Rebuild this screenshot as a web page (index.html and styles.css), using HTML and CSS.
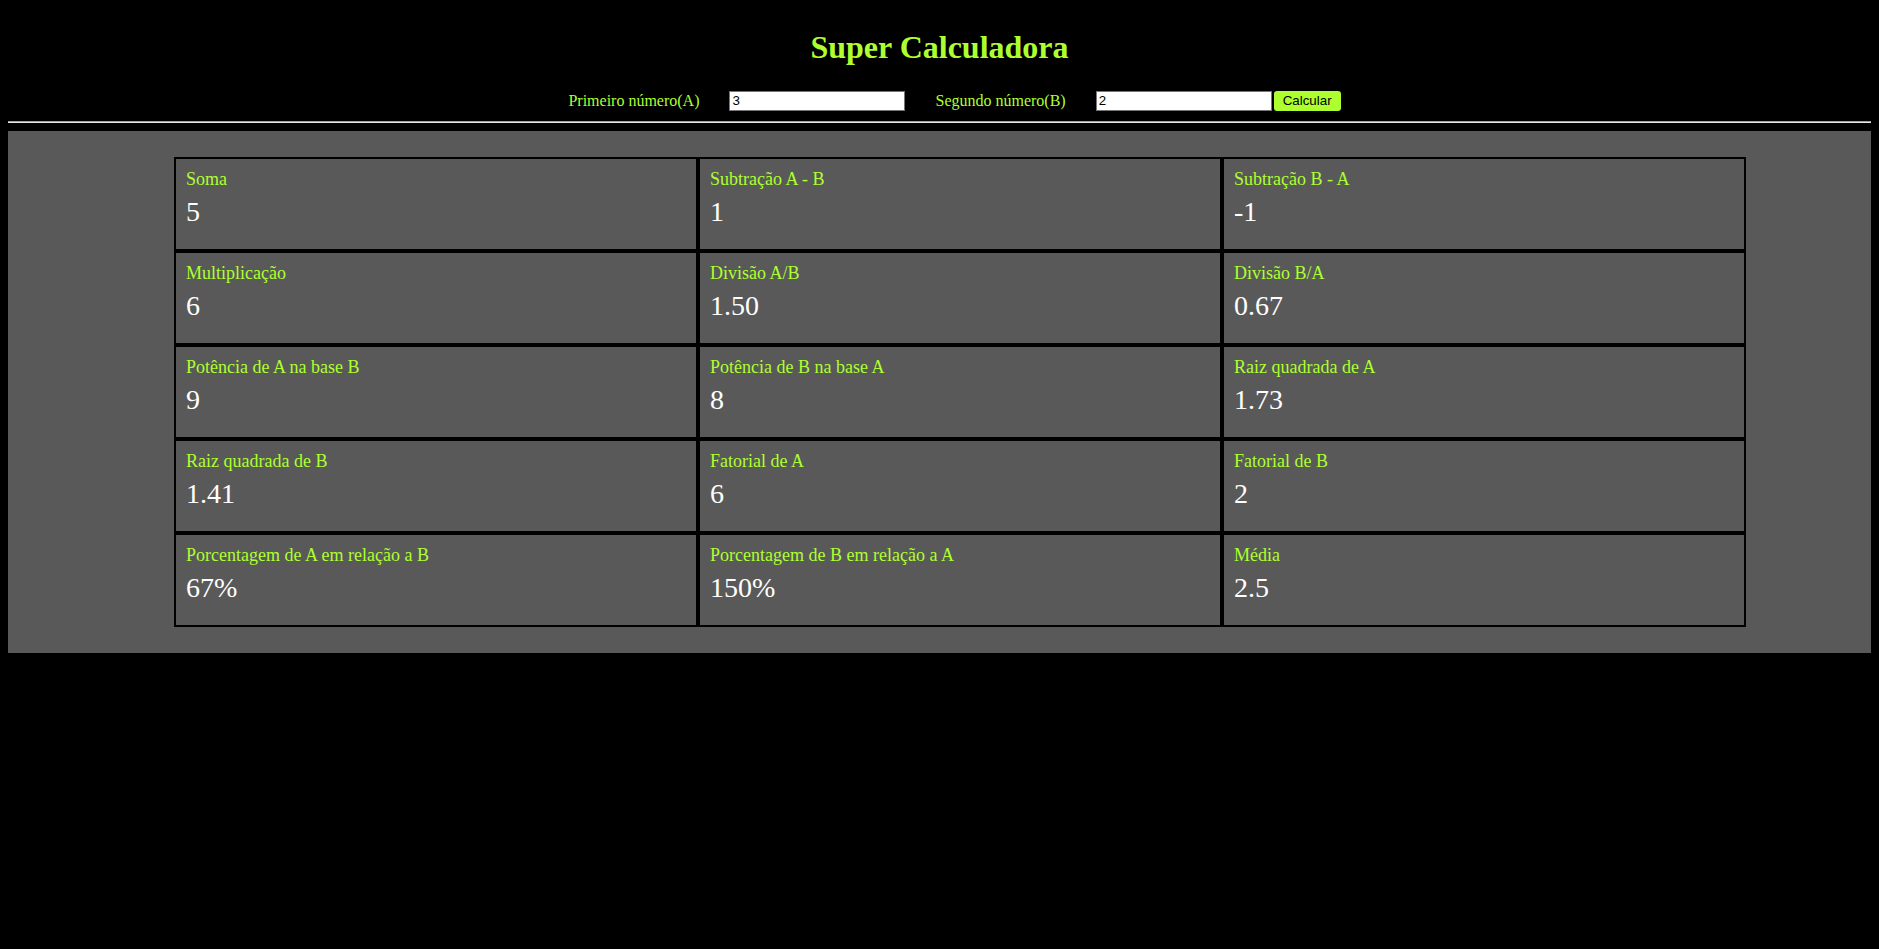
FILE: index.html
```html
<!DOCTYPE html>
<html lang="pt-BR">
<head>
<meta charset="utf-8">
<title>Super Calculadora</title>
<link rel="stylesheet" href="styles.css">
</head>
<body>
  <header class="header">
    <h1 class="title">Super Calculadora</h1>
    <form class="inputs" onsubmit="return false;">
      <label class="field-label" for="a">Primeiro número(A)</label>
      <input class="field" id="a" type="text" value="3">
      <label class="field-label" for="b">Segundo número(B)</label>
      <input class="field" id="b" type="text" value="2">
      <button class="calc-btn" type="button">Calcular</button>
    </form>
  </header>
  <hr class="divider">
  <main class="panel">
    <div class="grid">
      <div class="card"><div class="label">Soma</div><div class="value">5</div></div>
      <div class="card"><div class="label">Subtração A - B</div><div class="value">1</div></div>
      <div class="card"><div class="label">Subtração B - A</div><div class="value">-1</div></div>
      <div class="card"><div class="label">Multiplicação</div><div class="value">6</div></div>
      <div class="card"><div class="label">Divisão A/B</div><div class="value">1.50</div></div>
      <div class="card"><div class="label">Divisão B/A</div><div class="value">0.67</div></div>
      <div class="card"><div class="label">Potência de A na base B</div><div class="value">9</div></div>
      <div class="card"><div class="label">Potência de B na base A</div><div class="value">8</div></div>
      <div class="card"><div class="label">Raiz quadrada de A</div><div class="value">1.73</div></div>
      <div class="card"><div class="label">Raiz quadrada de B</div><div class="value">1.41</div></div>
      <div class="card"><div class="label">Fatorial de A</div><div class="value">6</div></div>
      <div class="card"><div class="label">Fatorial de B</div><div class="value">2</div></div>
      <div class="card"><div class="label">Porcentagem de A em relação a B</div><div class="value">67%</div></div>
      <div class="card"><div class="label">Porcentagem de B em relação a A</div><div class="value">150%</div></div>
      <div class="card"><div class="label">Média</div><div class="value">2.5</div></div>
    </div>
  </main>
</body>
</html>
```

FILE: styles.css
```css
html {
  background: #000;
}
body {
  margin: 8px;
  background: #000;
  font-family: "Liberation Serif", "Times New Roman", serif;
  color: #adff2f;
}
.header {
  padding-top: 21px;
}
.title {
  margin: 0;
  font-size: 32px;
  line-height: 37px;
  font-weight: bold;
  text-align: center;
  color: #adff2f;
}
.inputs {
  margin: 22px 0 0;
  height: 25px;
  display: flex;
  justify-content: center;
  align-items: center;
}
.field-label {
  margin: 0 30px;
  font-size: 16px;
  line-height: 18px;
  color: #adff2f;
}
.field {
  box-sizing: border-box;
  width: 176px;
  height: 20px;
  margin: 0;
  padding: 1px 2px;
  border: 1px solid #767676;
  background: #fff;
  color: #000;
  font-family: "Liberation Sans", Arial, sans-serif;
  font-size: 13.333px;
  outline: none;
}
.calc-btn {
  box-sizing: border-box;
  height: 20px;
  margin: 0 0 0 2px;
  padding: 0 9px;
  border: none;
  border-radius: 3px;
  background: #adff2f;
  color: #000;
  font-family: "Liberation Sans", Arial, sans-serif;
  font-size: 13.333px;
}
.divider {
  margin: 8px 0;
  height: 0;
  border: 0;
  border-top: 1px solid #a0a0a0;
  border-bottom: 1px solid #e8e8e8;
}
.panel {
  display: block;
  background: #595959;
  padding: 26px 125px 26px 166px;
}
.grid {
  display: grid;
  grid-template-columns: repeat(3, 1fr);
}
.card {
  box-sizing: border-box;
  height: 94px;
  border: 2px solid #000;
  padding: 10px 10px 0;
}
.label {
  font-size: 18px;
  line-height: 21px;
  color: #adff2f;
}
.value {
  margin-top: 6px;
  font-size: 28px;
  line-height: 32px;
  color: #fff;
}
```
